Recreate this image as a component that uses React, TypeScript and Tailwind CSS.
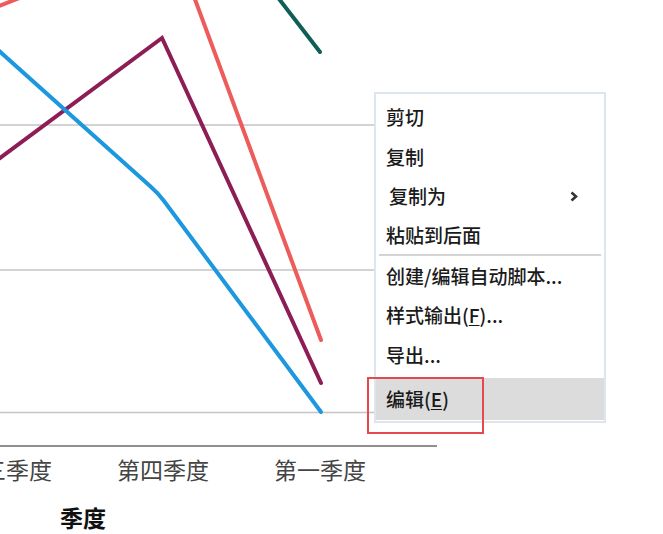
import React from "react";

const serif = { fontFamily: '"Liberation Serif", "Noto Sans CJK SC", serif' };

function Chart() {
  return (
    <svg width="663" height="534" viewBox="0 0 663 534" className="block">
      {/* grid */}
      <line x1="0" y1="125" x2="437" y2="125" stroke="#c4c4c4" strokeWidth="1.5" />
      <line x1="0" y1="270" x2="437" y2="270" stroke="#c4c4c4" strokeWidth="1.5" />
      <line x1="0" y1="412.5" x2="437" y2="412.5" stroke="#c4c4c4" strokeWidth="1.5" />
      <line x1="0" y1="446" x2="437" y2="446" stroke="#6b6b6b" strokeWidth="1.5" />

      {/* series */}
      <polyline points="-6,8 22,-3" fill="none" stroke="#ee5b5b" strokeWidth="4" />
      <polyline points="193,-6 321,340" fill="none" stroke="#ee5b5b" strokeWidth="4" strokeLinecap="round" />
      <polyline points="276,-5 320,52" fill="none" stroke="#0f5e57" strokeWidth="4" strokeLinecap="round" />
      <polyline points="-4,161 162,38 321,383" fill="none" stroke="#8c1d55" strokeWidth="4" strokeLinecap="round" strokeLinejoin="miter" />
      <path d="M-2,50 L150,186 Q158,193 164,201 L321,412" fill="none" stroke="#1d98df" strokeWidth="4" strokeLinecap="round" />

      {/* axis labels */}
      <g style={serif} fontSize="23" fill="#444" textAnchor="middle">
        <text x="6" y="479">第三季度</text>
        <text x="163" y="479">第四季度</text>
        <text x="320" y="479">第一季度</text>
      </g>
      <text x="83" y="527" style={serif} fontSize="23" fontWeight="700" fill="#111" textAnchor="middle">
        季度
      </text>
    </svg>
  );
}

function Item({ h, children, className = "" }: { h: string; children: React.ReactNode; className?: string }) {
  return <div className={`flex items-center pl-[10px] pr-[28px] ${h} ${className}`}>{children}</div>;
}

function ContextMenu() {
  return (
    <div
      className="absolute left-[374px] top-[92px] w-[232px] h-[331px] border-2 border-[#dfe5ee] bg-white text-[19px] font-medium text-[#1a1a1a] flex flex-col"
      style={{ fontFamily: '"Noto Sans CJK SC", "Liberation Sans", sans-serif' }}
    >
      <div className="h-[3px]" />
      <Item h="h-[40px]">剪切</Item>
      <Item h="h-[40px]">复制</Item>
      <Item h="h-[39px]" className="justify-between">
        <span className="pl-[3px]">复制为</span>
        <svg width="8" height="11" viewBox="0 0 8 11" className="mr-[-2px]">
          <path d="M1.5 1.5 L6 5.5 L1.5 9.5" fill="none" stroke="#333" strokeWidth="2.6" />
        </svg>
      </Item>
      <Item h="h-[38px]">粘贴到后面</Item>
      <div className="h-[2px] mx-[3px] bg-[#d4d4d4]" />
      <Item h="h-[40px]">创建/编辑自动脚本...</Item>
      <Item h="h-[39px]">
        样式输出(<span className="underline underline-offset-2">F</span>)...
      </Item>
      <Item h="h-[41px]">导出...</Item>
      <div className="h-[2px]" />
      <Item h="h-[42px]" className="bg-[#dcdcdc]">
        编辑(<span className="underline underline-offset-2">E</span>)
      </Item>
    </div>
  );
}

export default function App() {
  return (
    <div className="relative w-[663px] h-[534px] bg-white overflow-hidden">
      <Chart />
      <ContextMenu />
      <div className="absolute left-[367px] top-[377px] w-[117px] h-[57px] border-2 border-[#e5484d]" />
    </div>
  );
}
